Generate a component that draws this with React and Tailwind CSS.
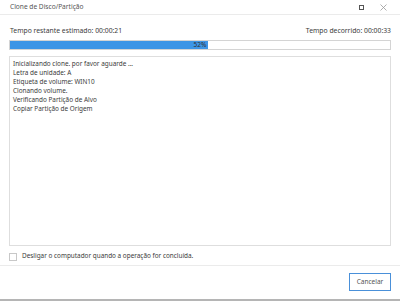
import React from 'react'

const logLines = [
  'Inicializando clone. por favor aguarde ...',
  'Letra de unidade: A',
  'Etiqueta de volume: WIN10',
  'Clonando volume.',
  'Verificando Partição de Alvo',
  'Copiar Partição de Origem',
]

export default function App() {
  const percent = 52

  return (
    <div
      className="w-[400px] h-[301px] bg-white flex flex-col text-[#3a3a3a] overflow-hidden"
      style={{ fontFamily: '"Noto Sans", "Open Sans", sans-serif' }}
    >
      {/* Title bar */}
      <div className="h-[15px] flex items-center justify-between border-b border-[#ebebeb] pl-[10px] pr-[13px]">
        <span className="text-[6.6px] text-[#555] leading-none">Clone de Disco/Partição</span>
        <div className="flex items-center gap-[16px]">
          <span className="w-[5px] h-[5px] border border-[#555]" />
          <svg width="7" height="7" viewBox="0 0 7 7">
            <path d="M0.5 0.5 L6.5 6.5 M6.5 0.5 L0.5 6.5" stroke="#999" strokeWidth="0.8" />
          </svg>
        </div>
      </div>

      {/* Body */}
      <div className="flex-1 flex flex-col px-[9px]">
        <div className="mt-[11px] h-[10px] flex items-center justify-between text-[6.8px] leading-none pl-[1px]">
          <span>Tempo restante estimado: 00:00:21</span>
          <span>Tempo decorrido: 00:00:33</span>
        </div>

        {/* Progress */}
        <div className="mt-[4px] h-[10px] border border-[#d4d4d4] relative bg-white">
          <div className="h-full bg-[#3d95e6]" style={{ width: `${percent}%` }} />
          <span className="absolute inset-0 flex items-center justify-center text-[6.5px] leading-none text-[#333]">
            {percent}%
          </span>
        </div>

        {/* Log */}
        <div className="mt-[6px] h-[190px] border border-[#dedede] px-[3px] pt-[3px]">
          {logLines.map((line) => (
            <div key={line} className="h-[9px] flex items-center text-[6.4px] leading-none">
              {line}
            </div>
          ))}
        </div>

        <div className="mt-[6px] h-[9px] flex items-center gap-[5px]">
          <span className="w-[8px] h-[8px] border border-[#c8c8c8] bg-white" />
          <span className="text-[6.4px] leading-none">Desligar o computador quando a operação for concluída.</span>
        </div>
      </div>

      {/* Footer */}
      <div className="h-[34px] border-t border-[#ebebeb] flex items-start justify-end pr-[9px] pt-[7px]">
        <button className="w-[42px] h-[18px] border border-[#4a90d9] bg-white text-[6.5px] text-[#555] leading-none flex items-center justify-center">
          Cancelar
        </button>
      </div>
      <div className="h-[2px] bg-[#b5b5b5]" />
    </div>
  )
}
